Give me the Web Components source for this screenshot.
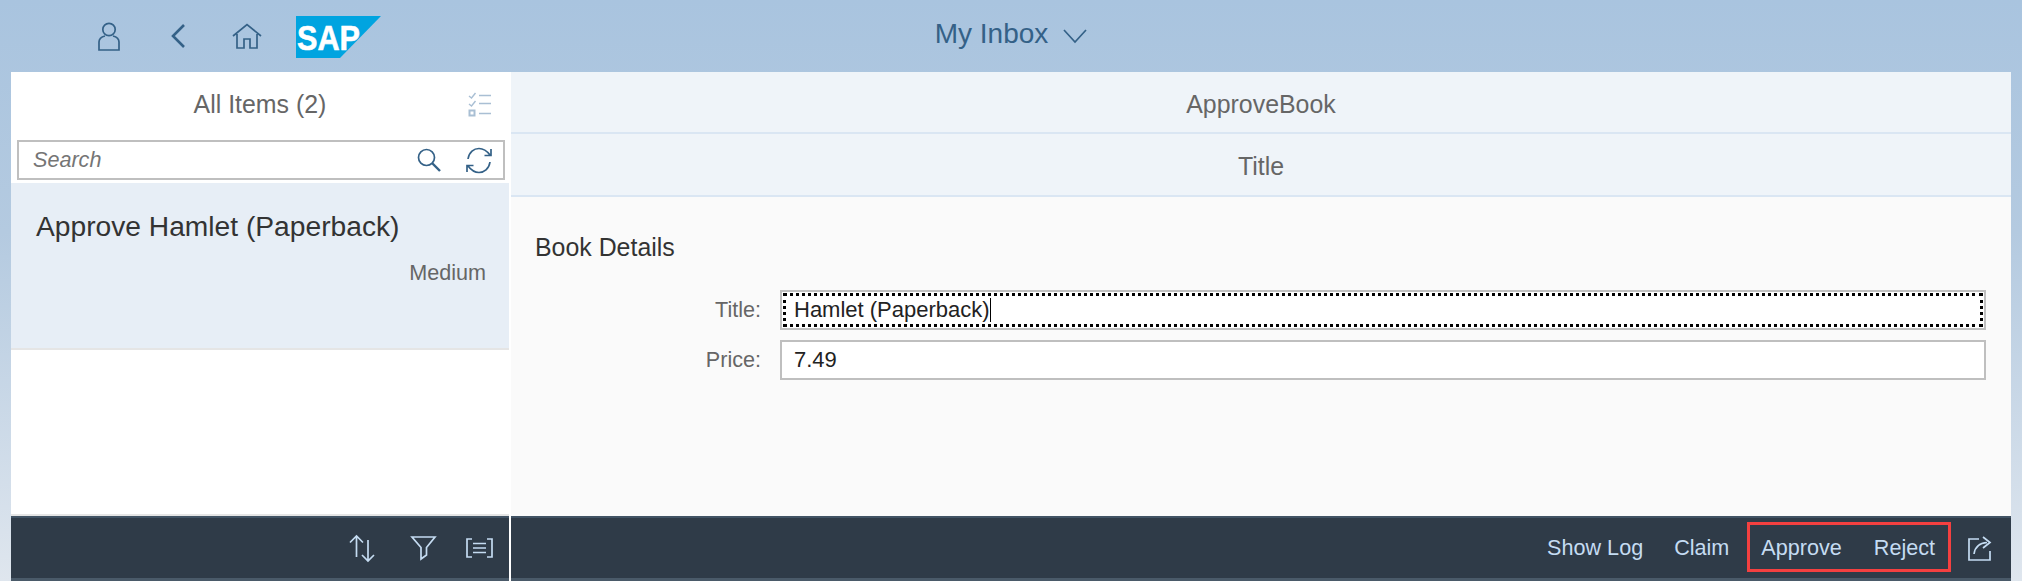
<!DOCTYPE html>
<html>
<head>
<meta charset="utf-8">
<title>My Inbox</title>
<style>
    html, body { margin: 0; height: 100%; }
    body {
        font-family: "Liberation Sans", Arial, sans-serif;
        background: linear-gradient(#a9c4df, #b4cae0 40%, #dfe6ee);
        overflow: hidden;
    }
</style>
</head>
<body>
<inbox-shell>
    <shell-header slot="header" title-text="My Inbox"></shell-header>
    <master-pane slot="master" heading="All Items (2)">
        <task-item name="Approve Hamlet (Paperback)" priority="Medium"></task-item>
    </master-pane>
    <detail-pane slot="detail" heading="ApproveBook" sub-heading="Title">
        <form-row label="Title" value="Hamlet (Paperback)" focused></form-row>
        <form-row label="Price" value="7.49"></form-row>
    </detail-pane>
</inbox-shell>

<script>
const ICONS = {
    person: `<svg width="24" height="29" viewBox="0 0 24 29"><circle cx="12" cy="7.5" r="6.2"/><path d="M8 14 C4 15 2 17 2 20 V28 H22 V20 C22 17 20 15 16 14"/></svg>`,
    back: `<svg width="16" height="26" viewBox="0 0 16 26"><path stroke-width="2.6" d="M14 2 L3 13 L14 24"/></svg>`,
    home: `<svg width="30" height="26" viewBox="0 0 30 26"><path d="M1 13 L15 1.5 L29 13 M5 11 V25 H12 V16 H18 V25 H25 V11"/></svg>`,
    chevron: `<svg width="24" height="14" viewBox="0 0 24 14"><path d="M1 1 L12 13 L23 1"/></svg>`,
    search: `<svg width="24" height="24" viewBox="0 0 24 24"><circle cx="9.5" cy="9.5" r="8"/><path stroke-width="2.4" d="M15 15 L23 23"/></svg>`,
    refresh: `<svg width="26" height="27" viewBox="0 0 26 27"><path d="M2 12 C3 5 8 1.5 13 1.5 C18 1.5 21 4 24 8 M25 2 V8.5 H18.5 M24 15 C23 22 18 25.500 13 25.500 C8 25.500 5 23 2 19 M1 25 V18.500 H7.500"/></svg>`,
    sort: `<svg width="26" height="27" viewBox="0 0 26 27"><path d="M7.500 22 V1.500 M1 7.500 L7.500 1 L14 7.500 M19 5 V25.500 M13 20 L19 26 L25 20"/></svg>`,
    filter: `<svg width="25" height="24" viewBox="0 0 25 24"><path d="M1 1 H24 L15.500 11.500 V19 L10 23 V11.500 Z"/></svg>`,
    lines: `<svg width="27" height="20" viewBox="0 0 27 20"><path d="M6 1 H1 V19 H6 M21 1 H26 V19 H21 M7 5.500 H20 M7 10 H20 M7 14.500 H20"/></svg>`,
    share: `<svg width="27" height="25" viewBox="0 0 27 25"><path d="M11 3 H1 V24 H22 V15 M6 18 C7 11 11 7 19 6.500 M15 1 L22 6.500 L15 12"/></svg>`,
    multi: `<svg width="23" height="26" viewBox="0 0 23 26"><path stroke-width="1.4" d="M1 4 L3.500 6 L7.500 1 M1 12 L3.500 14 L7.500 9 M11 3.500 H23 M11 11.500 H23 M11 21.500 H23"/><rect stroke-width="2" x="1.500" y="18.500" width="5" height="5"/></svg>`
};

class AppIcon extends HTMLElement {
    constructor() {
        super();
        this.attachShadow({ mode: "open" });
        this.shadowRoot.innerHTML = `
            <style>
                :host { display: flex; flex: none; color: inherit; }
                svg { display: block; overflow: visible; fill: none; stroke: currentColor; stroke-width: 1.7; }
            </style>
            ${ICONS[this.getAttribute("name")]}
        `;
    }
}
customElements.define("app-icon", AppIcon);

customElements.define("sap-logo", class extends HTMLElement {
    constructor() {
        super();
        this.attachShadow({ mode: "open" });
        this.shadowRoot.innerHTML = `
            <style>
                :host { display: block; width: 85px; height: 42px; flex: none; }
                svg { display: block; }
                text { font: bold 35px "Liberation Sans", Arial, sans-serif; fill: #fff; stroke: #fff; stroke-width: .6; }
            </style>
            <svg width="85" height="42" viewBox="0 0 85 42">
                <polygon points="0,0 85,0 44,42 0,42" fill="#00a4e0"/>
                <text x="1" y="34" textLength="63" lengthAdjust="spacingAndGlyphs">SAP</text>
            </svg>
        `;
    }
});

customElements.define("shell-header", class extends HTMLElement {
    constructor() {
        super();
        this.attachShadow({ mode: "open" });
        this.shadowRoot.innerHTML = `
            <style>
                :host {
                    display: grid;
                    grid-template-columns: 1fr auto 1fr;
                    align-items: center;
                    height: 72px;
                    color: #346187;
                }
                #left {
                    display: flex;
                    align-items: center;
                    padding-left: 97px;
                }
                #title {
                    display: flex;
                    align-items: center;
                    gap: 15px;
                    font-size: 28px;
                    white-space: nowrap;
                    padding-bottom: 5px;
                }
                #title app-icon { margin-top: 4px; }
                app-icon[name=back] { margin-left: 49px; }
                app-icon[name=home] { margin-left: 46px; }
                sap-logo { margin-left: 34px; margin-top: 2px; }
            </style>
            <div id="left">
                <app-icon name="person"></app-icon>
                <app-icon name="back"></app-icon>
                <app-icon name="home"></app-icon>
                <sap-logo></sap-logo>
            </div>
            <div id="title">
                <span>${this.getAttribute("title-text")}</span>
                <app-icon name="chevron"></app-icon>
            </div>
        `;
    }
});

customElements.define("footer-bar", class extends HTMLElement {
    constructor() {
        super();
        this.attachShadow({ mode: "open" });
        this.shadowRoot.innerHTML = `
            <style>
                :host {
                    display: flex;
                    justify-content: flex-end;
                    align-items: center;
                    box-sizing: border-box;
                    height: 65px;
                    background: #2f3b48;
                    border-top: 2px solid #415364;
                    border-bottom: 3px solid #4a5a69;
                    color: #c5dcf2;
                    font-size: 21.6px;
                }
            </style>
            <slot></slot>
        `;
    }
});

customElements.define("task-item", class extends HTMLElement {
    constructor() {
        super();
        this.attachShadow({ mode: "open" });
        this.shadowRoot.innerHTML = `
            <style>
                :host {
                    display: flex;
                    flex-direction: column;
                    box-sizing: border-box;
                    height: 167px;
                    padding: 27px 23px 0 25px;
                    background: #e7eef6;
                    border-bottom: 2px solid #e5e5e5;
                }
                #name { font-size: 28.2px; line-height: 32px; color: #333; white-space: nowrap; }
                #priority { font-size: 21.6px; line-height: 26px; color: #666; text-align: right; margin-top: 18px; }
            </style>
            <div id="name">${this.getAttribute("name")}</div>
            <div id="priority">${this.getAttribute("priority")}</div>
        `;
    }
});

customElements.define("master-pane", class extends HTMLElement {
    constructor() {
        super();
        this.attachShadow({ mode: "open" });
        this.shadowRoot.innerHTML = `
            <style>
                :host {
                    display: flex;
                    flex-direction: column;
                    background: #fff;
                    min-height: 0;
                }
                header {
                    display: flex;
                    align-items: center;
                    justify-content: center;
                    position: relative;
                    box-sizing: border-box;
                    height: 68px;
                    padding-bottom: 3px;
                    font-size: 24.9px;
                    color: #666;
                }
                header app-icon {
                    position: absolute;
                    right: 18px;
                    top: 20px;
                    color: #a9bfd4;
                }
                #search {
                    display: flex;
                    align-items: center;
                    box-sizing: border-box;
                    height: 40px;
                    margin: 0 4px 3px 6px;
                    padding: 0 11px 0 14px;
                    border: 2px solid #bfbfbf;
                    color: #346187;
                }
                #search span {
                    flex: 1;
                    font-size: 21.6px;
                    font-style: italic;
                    color: #757575;
                }
                #search app-icon[name=refresh] { margin-left: 25px; }
                #list { flex: 1; min-height: 0; }
                #bottom { height: 2px; background: #e5e5e5; }
                footer-bar { padding-right: 16px; }
                footer-bar app-icon[name=filter] { margin-left: 36px; }
                footer-bar app-icon[name=lines] { margin-left: 30px; }
            </style>
            <header>
                <span>${this.getAttribute("heading")}</span>
                <app-icon name="multi"></app-icon>
            </header>
            <div id="search">
                <span>Search</span>
                <app-icon name="search"></app-icon>
                <app-icon name="refresh"></app-icon>
            </div>
            <div id="list"><slot></slot></div>
            <div id="bottom"></div>
            <footer-bar>
                <app-icon name="sort"></app-icon>
                <app-icon name="filter"></app-icon>
                <app-icon name="lines"></app-icon>
            </footer-bar>
        `;
    }
});

customElements.define("form-row", class extends HTMLElement {
    constructor() {
        super();
        this.attachShadow({ mode: "open" });
        this.shadowRoot.innerHTML = `
            <style>
                :host {
                    display: grid;
                    grid-template-columns: 226px 1fr;
                    column-gap: 19px;
                    align-items: center;
                    font-size: 21.6px;
                }
                label { text-align: right; color: #666; }
                #box {
                    display: flex;
                    align-items: center;
                    box-sizing: border-box;
                    height: 40px;
                    padding-left: 12px;
                    background: #fff;
                    border: 2px solid #bfbfbf;
                    color: #222;
                    font-size: 22px;
                    position: relative;
                }
                #caret { display: none; width: 1px; height: 24px; background: #000; }
                :host([focused]) #caret { display: block; }
                :host([focused]) #box::after {
                    content: "";
                    position: absolute;
                    inset: 1px;
                    border: 3px dotted #000;
                }
            </style>
            <label>${this.getAttribute("label")}:</label>
            <div id="box"><span>${this.getAttribute("value")}</span><i id="caret"></i></div>
        `;
    }
});

customElements.define("detail-pane", class extends HTMLElement {
    constructor() {
        super();
        this.attachShadow({ mode: "open" });
        this.shadowRoot.innerHTML = `
            <style>
                :host {
                    display: flex;
                    flex-direction: column;
                    background: #fafafa;
                    min-height: 0;
                }
                .bar {
                    display: flex;
                    align-items: center;
                    justify-content: center;
                    box-sizing: border-box;
                    height: 62px;
                    padding-top: 4px;
                    background: #eff4f9;
                    border-bottom: 2px solid #dae6f3;
                    font-size: 24.9px;
                    color: #666;
                }
                #sub { height: 63px; padding-top: 4px; }
                #content { flex: 1; min-height: 0; padding: 35px 25px 0 24px; }
                h2 {
                    margin: 0 0 28px;
                    font-size: 24.9px;
                    line-height: 30px;
                    font-weight: normal;
                    color: #333;
                }
                #rows { display: flex; flex-direction: column; gap: 10px; }
                #bottom { height: 2px; background: #fafafa; }
                footer-bar { gap: 0; padding-right: 16px; }
                footer-bar span { white-space: nowrap; }
                #log { margin-right: 31px; }
                #claim { margin-right: 32px; }
                #approve { margin-right: 32px; }
                #share { margin-left: 33px; }
                /* callout drawn on top of the screenshot */
                #callout {
                    position: absolute;
                    left: 1236px;
                    top: 6px;
                    width: 204px;
                    height: 50px;
                    box-sizing: border-box;
                    border: 3px solid #f44040;
                }
                #foot { position: relative; }
            </style>
            <div class="bar">${this.getAttribute("heading")}</div>
            <div class="bar" id="sub">${this.getAttribute("sub-heading")}</div>
            <div id="content">
                <h2>Book Details</h2>
                <div id="rows"><slot></slot></div>
            </div>
            <div id="bottom"></div>
            <div id="foot">
                <footer-bar>
                    <span id="log">Show Log</span>
                    <span id="claim">Claim</span>
                    <span id="approve">Approve</span>
                    <span>Reject</span>
                    <app-icon id="share" name="share"></app-icon>
                </footer-bar>
                <div id="callout"></div>
            </div>
        `;
    }
});

customElements.define("inbox-shell", class extends HTMLElement {
    constructor() {
        super();
        this.attachShadow({ mode: "open" });
        this.shadowRoot.innerHTML = `
            <style>
                :host {
                    display: grid;
                    grid-template-columns: 1fr;
                    grid-template-rows: 72px 1fr;
                    height: 581px;
                }
                #panes {
                    display: grid;
                    grid-template-columns: 498px 1fr;
                    column-gap: 2px;
                    margin: 0 11px;
                    min-height: 0;
                    background: #fff;
                }
            </style>
            <slot name="header"></slot>
            <div id="panes">
                <slot name="master"></slot>
                <slot name="detail"></slot>
            </div>
        `;
    }
});
</script>
</body>
</html>
